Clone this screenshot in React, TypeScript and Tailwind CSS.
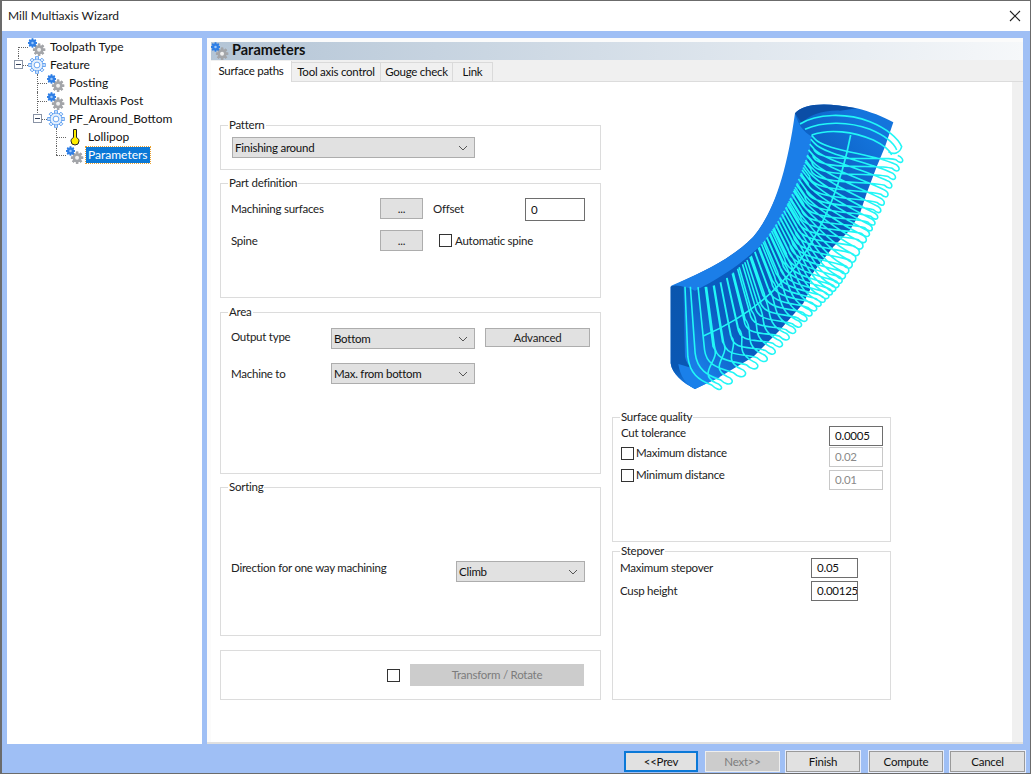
import React from "react";

const font = "font-['Lato','Noto_Sans',sans-serif]";

function GearBlue() {
  const teeth = Array.from({ length: 8 }, (_, i) => i * 45);
  return (
    <svg width="18" height="18" viewBox="0 0 20 20" className="shrink-0">
      <g stroke="#5b9df0" strokeWidth="1" fill="#e4effc">
        {teeth.map((a) => (
          <rect key={a} x="8.4" y="0.8" width="3.2" height="4" transform={`rotate(${a} 10 10)`} />
        ))}
        <circle cx="10" cy="10" r="6.6" />
      </g>
      <circle cx="10" cy="10" r="3.2" fill="#fff" stroke="#5b9df0" />
    </svg>
  );
}

function GearPair() {
  const teeth = Array.from({ length: 8 }, (_, i) => i * 45);
  return (
    <svg width="18" height="18" viewBox="0 0 20 20" className="shrink-0">
      <g fill="#a3a5a9">
        {teeth.map((a) => (
          <rect key={a} x="11" y="6.2" width="2.6" height="13.6" transform={`rotate(${a} 12.3 13)`} />
        ))}
        <circle cx="12.3" cy="13" r="5" />
      </g>
      <circle cx="12.3" cy="13" r="2.2" fill="#efefef" />
      <g fill="#2f7fe6">
        {teeth.map((a) => (
          <rect key={a} x="4.2" y="0.5" width="1.8" height="10" transform={`rotate(${a} 5 5.5)`} />
        ))}
        <circle cx="5" cy="5.5" r="3.8" />
      </g>
      <circle cx="5" cy="5.5" r="1.4" fill="#9cc8fa" />
    </svg>
  );
}

function Lollipop() {
  return (
    <svg width="18" height="18" viewBox="0 0 18 18" className="shrink-0">
      <path d="M7.5 1.5 H10.5 V9.5 C12.5 10.5 13 12 13 13 A4 4 0 0 1 5 13 C5 12 5.5 10.5 7.5 9.5 Z" fill="#ffee00" stroke="#222" strokeWidth="1" />
    </svg>
  );
}

function Minus() {
  return (
    <span className="absolute top-[4px] w-[9px] h-[9px] -ml-[4px] border border-[#8a94a6] bg-white flex items-center justify-center">
      <span className="w-[5px] h-px bg-[#33415c]" />
    </span>
  );
}

function Chevron() {
  return (
    <svg width="10" height="6" viewBox="0 0 10 6" className="shrink-0">
      <path d="M1 1 L5 5 L9 1" fill="none" stroke="#555" strokeWidth="1" />
    </svg>
  );
}

function Combo({ text, w }: { text: string; w: string }) {
  return (
    <div className={`${w} h-[21px] bg-[#e1e1e1] border border-[#adadad] flex items-center justify-between pl-[2px] pr-[6px] text-[11.5px] text-[#111] shrink-0`}>
      <span>{text}</span>
      <Chevron />
    </div>
  );
}

function Group({ title, className, children }: { title?: string; className: string; children?: React.ReactNode }) {
  return (
    <div className={`relative border border-[#dcdcdc] ${className}`}>
      {title && (
        <span className="absolute -top-[9px] left-[7px] bg-white px-[1px] text-[11.5px] leading-[16px] text-[#222]">{title}</span>
      )}
      {children}
    </div>
  );
}

function Check() {
  return <span className="w-[13px] h-[13px] border border-[#333] bg-white shrink-0 block" />;
}

function Field({ value, w, dim }: { value: string; w: string; dim?: boolean }) {
  return (
    <div className={`${w} bg-white border flex items-center pl-[5px] text-[11.5px] overflow-hidden whitespace-nowrap shrink-0 ${dim ? "border-[#c8c8c8] text-[#8a8a8a]" : "border-[#6e6e6e] text-[#111]"}`}>
      {value}
    </div>
  );
}

function Tree({ left, icon, label, selected, box, v }: { left: string; icon: React.ReactNode; label: string; selected?: boolean; box?: boolean; v: "full" | "top" | "bottom" }) {
  const vClass = v === "full" ? "top-0 bottom-0" : v === "top" ? "top-0 h-[9px]" : "top-[9px] bottom-0";
  return (
    <div className={`relative flex items-center h-[18px] ${left}`}>
      <span className={`absolute -ml-[10px] border-l border-dotted border-[#666] ${vClass}`} />
      <span className="absolute top-[9px] -ml-[10px] w-[10px] border-t border-dotted border-[#666]" />
      {box && <span className="absolute -ml-[10px] top-0"><Minus /></span>}
      {icon}
      <span className={`ml-[2px] px-[2px] text-[12px] leading-[16px] whitespace-nowrap ${selected ? "bg-[#0a78d7] text-white outline-1 outline-dotted outline-[#e8a030]" : "text-[#111]"}`}>{label}</span>
    </div>
  );
}

function Tab({ label, active, w }: { label: string; active?: boolean; w: string }) {
  return (
    <div className={`${w} flex items-center justify-center text-[11.5px] tracking-[-0.25px] text-[#111] whitespace-nowrap border-r border-[#dadada] ${active ? "h-[21px] bg-white -mb-px pb-[2px]" : "h-[19px] bg-[#f0f0f0] border-t"}`}>
      {label}
    </div>
  );
}

function Btn({ label, w, ml, focus, dim }: { label: string; w: string; ml: string; focus?: boolean; dim?: boolean }) {
  return (
    <div className={`${w} ${ml} h-[21px] flex items-center justify-center text-[11.5px] tracking-[-0.25px] shrink-0 ${focus ? "border-[2px] border-[#0a78d7] bg-[#e1e1e1] text-[#111]" : dim ? "border border-[#eeeeee] bg-[#cccccc] text-[#7c7c7c]" : "border border-[#9a9a9a] outline-1 outline-[#e8eefc] bg-[#e1e1e1] text-[#111]"}`}>
      {label}
    </div>
  );
}

type P = [number, number];

function curve(pts: P[], t: number): P {
  const n = pts.length - 1;
  const s = Math.min(Math.max(t, 0), 1) * n;
  const i = Math.min(Math.floor(s), n - 1);
  const u = s - i;
  const p0 = pts[Math.max(i - 1, 0)];
  const p1 = pts[i];
  const p2 = pts[i + 1];
  const p3 = pts[Math.min(i + 2, n)];
  const f = (a: number, b: number, c: number, d: number) =>
    0.5 * (2 * b + (c - a) * u + (2 * a - 5 * b + 4 * c - d) * u * u + (3 * b - a - 3 * c + d) * u * u * u);
  return [f(p0[0], p1[0], p2[0], p3[0]), f(p0[1], p1[1], p2[1], p3[1])];
}

const wallPts: P[] = [[135, 590], [225, 585], [305, 525], [375, 450], [430, 365], [470, 280], [500, 200], [515, 135]];
const edgePts: P[] = [[215, 885], [340, 812], [430, 728], [510, 645], [585, 565], [660, 440], [705, 350], [750, 250], [785, 170]];

function corner(t: number): { a: P; c: P } {
  const a = curve(wallPts, t);
  const drop = 200 * Math.pow(1 - t, 1.6) + 10;
  const dropX = 4 + t * 90;
  return { a, c: [a[0] + dropX * (drop / 100), a[1] + drop] };
}

const fx = (n: number) => n.toFixed(1);

function ribPath(): string {
  const count = 40;
  let d = "";
  for (let i = 0; i < count; i++) {
    const u = i / (count - 1);
    const t = u + 0.06 * Math.sin(2 * Math.PI * u);
    const { a, c } = corner(t);
    const e = curve(edgePts, t);
    const e2 = curve(edgePts, t + 0.018);
    const r = corner(t + 0.1);
    const out = 28 - 8 * t;
    d += `M${fx(a[0])} ${fx(a[1])} L${fx(c[0])} ${fx(c[1])} `;
    d += `C${fx(c[0] + 6)} ${fx(c[1] + 50)} ${fx(e[0] - 40)} ${fx(e[1] - 14)} ${fx(e[0])} ${fx(e[1])} `;
    d += `C${fx(e[0] + out)} ${fx(e[1] + out)} ${fx(e2[0] + out + 4)} ${fx(e2[1] + out * 0.4)} ${fx(e2[0])} ${fx(e2[1])} `;
    d += `C${fx(e2[0] - 60)} ${fx(e2[1] - 30)} ${fx(r.c[0] + 30)} ${fx(r.c[1] + 36)} ${fx(r.c[0])} ${fx(r.c[1])} `;
    d += `L${fx(r.a[0])} ${fx(r.a[1])} `;
  }
  return d;
}

function Part() {
  return (
    <svg width="300" height="310" viewBox="0 0 900 930" className="shrink-0">
      <defs>
        <linearGradient id="pg" x1="0.1" y1="0.9" x2="0.9" y2="0.1">
          <stop offset="0" stopColor="#1a7ce6" />
          <stop offset="0.18" stopColor="#0a5cc0" />
          <stop offset="0.7" stopColor="#0857b8" />
          <stop offset="1" stopColor="#1474dc" />
        </linearGradient>
        <linearGradient id="pl" x1="0" y1="0" x2="0" y2="1">
          <stop offset="0" stopColor="#0a56ae" />
          <stop offset="0.8" stopColor="#0a58b4" />
          <stop offset="1" stopColor="#1a80ea" />
        </linearGradient>
      </defs>
      <path d="M465 70 C490 42 550 35 650 55 C690 65 730 80 760 97 L735 170 L710 230 L680 310 L660 370 L630 420 L580 470 L510 560 L510 600 L490 640 L420 720 L340 800 L240 860 L165 897 C130 880 95 850 92 820 L92 590 C190 545 270 510 340 440 C400 370 440 250 465 110 Z" fill="url(#pg)" />
      <path d="M92 590 C100 582 115 585 130 590 L135 800 C140 830 170 850 215 860 L165 897 C130 880 95 850 92 820 Z" fill="url(#pl)" />
      <path d="M115 822 C150 830 190 850 240 862 L165 897 C140 885 120 860 115 822 Z" fill="#1a80ea" />
      <path d="M92 588 C190 545 270 510 340 440 C400 370 440 250 465 70 C475 105 490 125 515 140 C505 230 470 330 410 415 C340 500 250 560 165 602 C140 590 115 583 92 588 Z" fill="#1b7ee8" />
      <path d="M465 70 C490 42 550 35 650 55 L600 62 C550 60 505 75 485 100 Z" fill="#0b4ea6" />
      <g fill="none" stroke="#22f6f6" strokeWidth="4.8">
        <path d={ribPath()} />
        <path d="M190 738 C280 700 380 640 470 525 C540 430 600 300 632 135" strokeWidth="5" />
        <path d="M480 102 C530 70 620 68 690 95 C740 115 775 145 785 170 C780 190 760 195 745 185" />
        <path d="M495 118 C550 92 630 95 690 118 C730 135 760 155 770 180" />
        <path d="M515 135 C570 115 640 125 700 150 C730 165 750 180 755 195" />
      </g>
    </svg>
  );
}

export default function App() {
  return (
    <div className={`${font} w-[1031px] h-[774px] overflow-hidden bg-[#9fbff5] flex flex-col border-t border-b border-r border-l-2 border-[#6b6b6b]`}>
      <div className="h-[30px] bg-white flex items-center justify-between pl-[6px] pr-[9px] shrink-0">
        <span className="text-[12px] text-[#1a1a1a]">Mill Multiaxis Wizard</span>
        <svg width="12" height="12" viewBox="0 0 12 12">
          <path d="M1 1 L11 11 M11 1 L1 11" stroke="#222" strokeWidth="1.1" />
        </svg>
      </div>

      <div className="h-[713px] shrink-0 flex pt-[7px] pl-[5px]">
        <div className="w-[195px] h-[706px] bg-white shrink-0 flex flex-col">
          <Tree left="pl-[21px]" v="bottom" icon={<GearPair />} label="Toolpath Type" />
          <Tree left="pl-[21px]" v="top" box icon={<GearBlue />} label="Feature" />
          <Tree left="pl-[40px]" v="full" icon={<GearPair />} label="Posting" />
          <Tree left="pl-[40px]" v="full" icon={<GearPair />} label="Multiaxis Post" />
          <Tree left="pl-[40px]" v="top" box icon={<GearBlue />} label="PF_Around_Bottom" />
          <Tree left="pl-[59px]" v="full" icon={<Lollipop />} label="Lollipop" />
          <Tree left="pl-[59px]" v="top" icon={<GearPair />} label="Parameters" selected />
        </div>

        <div className="ml-[5px] w-[816px] h-[706px] bg-[#fbfbfb] pl-[4px] pt-[4px] border-b-2 border-[#e0e0e0] shrink-0 flex flex-col">
          <div className="h-[18px] bg-gradient-to-r from-[#b4c5d6] to-[#f6f8fa] flex items-center text-[14.5px] font-bold text-[#111] shrink-0">
            <GearPair />
            <span className="ml-[3px] -mt-[3px]">Parameters</span>
          </div>
          <div className="h-[22px] flex items-end bg-[#f0f0f0] border-b border-[#dcdcdc] shrink-0">
            <Tab label="Surface paths" active w="w-[81px]" />
            <Tab label="Tool axis control" w="w-[89px]" />
            <Tab label="Gouge check" w="w-[72px]" />
            <Tab label="Link" w="w-[40px]" />
          </div>

          <div className="flex-1 min-h-0 flex pl-[9px] bg-white border-r-[11px] border-[#f0f0f0] tracking-[-0.25px]">
            <div className="w-[381px] shrink-0 pt-[43px] flex flex-col">
              <Group title="Pattern" className="h-[45px] pt-[11px] pl-[11px]">
                <Combo text="Finishing around" w="w-[243px]" />
              </Group>
              <Group title="Part definition" className="h-[115px] mt-[13px] pl-[10px] pt-[14px]">
                <div className="flex items-start text-[11.5px] text-[#222] h-[21px]">
                  <span className="w-[149px] leading-[21px]">Machining surfaces</span>
                  <div className="w-[43px] h-[21px] bg-[#e1e1e1] border border-[#adadad] flex items-center justify-center">...</div>
                  <span className="ml-[10px] w-[92px] leading-[21px]">Offset</span>
                  <Field value="0" w="w-[60px] h-[23px]" />
                </div>
                <div className="flex items-center text-[11.5px] text-[#222] h-[21px] mt-[11px]">
                  <span className="w-[149px]">Spine</span>
                  <div className="w-[43px] h-[21px] bg-[#e1e1e1] border border-[#adadad] flex items-center justify-center">...</div>
                  <span className="ml-[16px]"><Check /></span>
                  <span className="ml-[3px]">Automatic spine</span>
                </div>
              </Group>
              <Group title="Area" className="h-[162px] mt-[14px] pl-[10px] pt-[15px]">
                <div className="flex items-start text-[11.5px] text-[#222] h-[21px]">
                  <span className="w-[100px] leading-[18px]">Output type</span>
                  <Combo text="Bottom" w="w-[144px]" />
                  <div className="ml-[10px] w-[105px] h-[19px] bg-[#e1e1e1] border border-[#adadad] flex items-center justify-center">Advanced</div>
                </div>
                <div className="flex items-center text-[11.5px] text-[#222] h-[21px] mt-[14px]">
                  <span className="w-[100px]">Machine to</span>
                  <Combo text="Max. from bottom" w="w-[144px]" />
                </div>
              </Group>
              <Group title="Sorting" className="h-[149px] mt-[13px] pl-[10px] pt-[73px]">
                <div className="flex items-start text-[11.5px] text-[#222] h-[21px]">
                  <span className="w-[225px] leading-[14px]">Direction for one way machining</span>
                  <Combo text="Climb" w="w-[129px]" />
                </div>
              </Group>
              <Group className="h-[50px] mt-[14px] flex items-center pl-[166px]">
                <Check />
                <div className="ml-[10px] w-[174px] h-[22px] bg-[#cccccc] flex items-center justify-center text-[11.5px] text-[#7c7c7c]">Transform / Rotate</div>
              </Group>
            </div>

            <div className="w-[279px] ml-[11px] shrink-0 flex flex-col">
              <div className="h-[310px] mt-[8px] ml-[28px] mb-[17px] shrink-0 flex">
                <Part />
              </div>
              <Group title="Surface quality" className="h-[125px] pl-[8px] pr-[7px] pt-[8px] text-[11.5px] text-[#222]">
                <div className="flex items-start justify-between h-[20px]">
                  <span className="leading-[16px] -mt-px">Cut tolerance</span>
                  <Field value="0.0005" w="w-[54px] h-[20px]" />
                </div>
                <div className="flex items-start justify-between mt-px h-[20px]">
                  <span className="flex items-center gap-[2px] leading-[16px] -mt-[2px]"><Check />Maximum distance</span>
                  <Field value="0.02" w="w-[54px] h-[20px]" dim />
                </div>
                <div className="flex items-start justify-between mt-[3px] h-[20px]">
                  <span className="flex items-center gap-[2px] leading-[16px] -mt-[3px]"><Check />Minimum distance</span>
                  <Field value="0.01" w="w-[54px] h-[20px]" dim />
                </div>
              </Group>
              <Group title="Stepover" className="h-[149px] mt-[9px] pl-[7px] pt-[6px] text-[11.5px] text-[#222]">
                <div className="flex items-center h-[20px]">
                  <span className="w-[191px]">Maximum stepover</span>
                  <Field value="0.05" w="w-[47px] h-[20px]" />
                </div>
                <div className="flex items-center h-[20px] mt-[3px]">
                  <span className="w-[191px]">Cusp height</span>
                  <Field value="0.00125" w="w-[47px] h-[20px]" />
                </div>
              </Group>
            </div>
          </div>
        </div>
      </div>

      <div className="h-[29px] shrink-0 flex items-start pt-[7px] pl-[622px]">
        <Btn label="<<Prev" w="w-[74px]" ml="ml-0" focus />
        <Btn label="Next>>" w="w-[75px]" ml="ml-[7px]" dim />
        <Btn label="Finish" w="w-[74px]" ml="ml-[6px]" />
        <Btn label="Compute" w="w-[74px]" ml="ml-[9px]" />
        <Btn label="Cancel" w="w-[75px]" ml="ml-[7px]" />
      </div>
    </div>
  );
}
